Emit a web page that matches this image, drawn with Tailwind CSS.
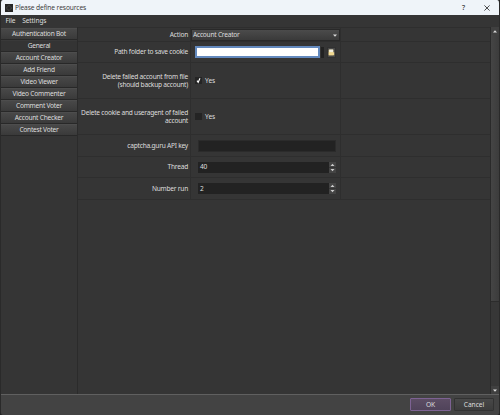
<!DOCTYPE html>
<html lang="en">
<head>
    <meta charset="UTF-8">
    <meta name="viewport" content="width=device-width, initial-scale=1.0">
    <script src="https://cdn.jsdelivr.net/npm/@tailwindcss/browser@4"></script>
    <title>Please define resources</title>
</head>
<body class="bg-[#202020] overflow-hidden">

<div class="w-[500px] h-[415px] flex flex-col bg-[#353535] text-[#dedede] font-['Noto_Sans',sans-serif] text-[6.6px] leading-[8px] tracking-[-0.23px] rounded-[3px] overflow-hidden border-l border-r border-[#2a2a2a]">

    <!-- Title bar -->
    <header class="h-[15px] shrink-0 flex items-center bg-[#eff4f9] text-[#333] pl-1">
        <svg class="w-2 h-2" viewBox="0 0 8 8">
            <rect width="8" height="8" fill="#262626"/>
            <circle cx="4" cy="4" r="2.2" fill="none" stroke="#666" stroke-width=".7" stroke-dasharray="1 .6"/>
        </svg>
        <h1 class="ml-[2px] font-['Open_Sans',sans-serif] text-[6.7px] tracking-[-0.12px]">Please define resources</h1>
        <span class="ml-auto mr-[19px] text-[7px] font-medium">?</span>
        <svg class="w-[6px] h-[6px] mr-[9px]" viewBox="0 0 6 6" stroke="#222" stroke-width=".8"><path d="M.4.4l5.2 5.2M5.6.4L.4 5.6"/></svg>
    </header>

    <!-- Menu -->
    <nav class="h-3 shrink-0 flex items-center gap-[7px] pl-[4.5px]">
        <span>File</span>
        <span class="tracking-[-0.1px]">Settings</span>
    </nav>

    <main class="h-[367px] shrink-0 flex">
        <!-- Sidebar -->
        <aside class="w-[77px] shrink-0 border-r border-[#2b2b2b] pt-px text-center">
            <button class="block w-[76px] h-3 pb-px bg-linear-to-b from-[#484848] to-[#3a3a3a] border-t border-t-[#4d4d4d] border-b border-b-[#282828] leading-[9px]">Authentication Bot</button>
            <button class="block w-[76px] h-3 pb-px bg-[#343434] border-t border-t-[#393939] border-b border-b-[#282828] leading-[9px]">General</button>
            <button class="block w-[76px] h-3 pb-px bg-linear-to-b from-[#484848] to-[#3a3a3a] border-t border-t-[#4d4d4d] border-b border-b-[#282828] leading-[9px]">Account Creator</button>
            <button class="block w-[76px] h-3 pb-px bg-linear-to-b from-[#484848] to-[#3a3a3a] border-t border-t-[#4d4d4d] border-b border-b-[#282828] leading-[9px]">Add Friend</button>
            <button class="block w-[76px] h-3 pb-px bg-linear-to-b from-[#484848] to-[#3a3a3a] border-t border-t-[#4d4d4d] border-b border-b-[#282828] leading-[9px]">Video Viewer</button>
            <button class="block w-[76px] h-3 pb-px bg-linear-to-b from-[#484848] to-[#3a3a3a] border-t border-t-[#4d4d4d] border-b border-b-[#282828] leading-[9px]">Video Commenter</button>
            <button class="block w-[76px] h-3 pb-px bg-linear-to-b from-[#484848] to-[#3a3a3a] border-t border-t-[#4d4d4d] border-b border-b-[#282828] leading-[9px]">Comment Voter</button>
            <button class="block w-[76px] h-3 pb-px bg-linear-to-b from-[#484848] to-[#3a3a3a] border-t border-t-[#4d4d4d] border-b border-b-[#282828] leading-[9px]">Account Checker</button>
            <button class="block w-[76px] h-3 pb-px bg-linear-to-b from-[#484848] to-[#3a3a3a] border-t border-t-[#4d4d4d] border-b border-b-[#282828] leading-[9px]">Contest Voter</button>
        </aside>

        <!-- Form -->
        <section class="flex-1 border-t border-[#2e2e2e] whitespace-nowrap">
            <div class="h-[14px] flex border-b border-[#2e2e2e]">
                <div class="w-[113px] pr-[2px] flex items-center justify-end border-r border-[#2e2e2e]">Action</div>
                <div class="w-[150px] border-r border-[#2e2e2e]">
                    <div class="w-[149px] mt-px h-3 px-[2px] flex items-center justify-between bg-linear-to-b from-[#4b4b4b] to-[#3a3a3a] border border-[#292929]">
                        <span class="-ml-px">Account Creator</span>
                        <svg class="w-1 h-[3px]" viewBox="0 0 4 3"><path d="M0 .5h4L2 2.7z" fill="#ddd"/></svg>
                    </div>
                </div>
            </div>
            <div class="h-[21px] flex border-b border-[#2e2e2e]">
                <div class="w-[113px] pr-[2px] flex items-center justify-end border-r border-[#2e2e2e]">Path folder to save cookie</div>
                <div class="w-[150px] pl-1 flex items-center border-r border-[#2e2e2e]">
                    <div class="w-[125px] h-3 bg-white border-2 border-[#6389bd]"></div>
                    <div class="w-[3px] h-[11px] ml-px bg-[#222]"></div>
                    <button class="w-[9px] h-[11px] ml-[3px] flex items-center justify-center bg-[#484848] border border-[#303030]">
                        <svg class="w-[7px] h-[7px] shrink-0" viewBox="0 0 7 7">
                            <path d="M.7.8h4.6v5.5H.7z" fill="#e2c878"/>
                            <path d="M1.2.5h4v3h-4z" fill="#f2efe2"/>
                            <path d="M.8 3.2h5.4v3H.8z" fill="#f0d890"/>
                        </svg>
                    </button>
                </div>
            </div>
            <div class="h-9 flex border-b border-[#2e2e2e]">
                <div class="w-[113px] pr-[2px] flex items-center justify-end text-right border-r border-[#2e2e2e]">Delete failed account from file<br>(should backup account)</div>
                <div class="w-[150px] pl-1 flex items-center gap-[3px] border-r border-[#2e2e2e]">
                    <svg class="w-[7px] h-[7px]" viewBox="0 0 7 7"><rect width="7" height="7" fill="#242424"/><path d="M2 3.6l1.2 1.7L5 1.2" fill="none" stroke="#fff" stroke-width="1.1"/></svg>
                    <span class="tracking-[0px]">Yes</span>
                </div>
            </div>
            <div class="h-9 flex border-b border-[#2e2e2e]">
                <div class="w-[113px] pr-[2px] flex items-center justify-end text-right border-r border-[#2e2e2e]">Delete cookie and useragent of failed<br>account</div>
                <div class="w-[150px] pl-1 flex items-center gap-[3px] border-r border-[#2e2e2e]">
                    <svg class="w-[7px] h-[7px]" viewBox="0 0 7 7"><rect width="7" height="7" fill="#242424"/></svg>
                    <span class="tracking-[0px]">Yes</span>
                </div>
            </div>
            <div class="h-[22px] flex border-b border-[#2e2e2e]">
                <div class="w-[113px] pr-[2px] flex items-center justify-end border-r border-[#2e2e2e]">captcha.guru API key</div>
                <div class="w-[150px] pl-[7px] flex items-center border-r border-[#2e2e2e]">
                    <div class="w-[138px] h-3 bg-[#222] border border-[#2b2b2b]"></div>
                </div>
            </div>
            <div class="h-[21px] flex border-b border-[#2e2e2e]">
                <div class="w-[113px] pr-[2px] flex items-center justify-end border-r border-[#2e2e2e]">Thread</div>
                <div class="w-[150px] pl-[7px] flex items-center border-r border-[#2e2e2e]">
                    <div class="w-[138px] h-[11px] pl-[2px] flex items-center justify-between bg-[#222]">
                        <span>40</span>
                        <svg class="w-[7px] h-[11px]" viewBox="0 0 7 11"><rect width="7" height="11" fill="#444"/><path d="M0 5.5h7" stroke="#2c2c2c" stroke-width=".6"/><path d="M1.5 4h4l-2-2.3zM1.5 7h4l-2 2.3z" fill="#ccc"/></svg>
                    </div>
                </div>
            </div>
            <div class="h-[22px] flex border-b border-[#2e2e2e]">
                <div class="w-[113px] pr-[2px] flex items-center justify-end border-r border-[#2e2e2e]">Number run</div>
                <div class="w-[150px] pl-[7px] flex items-center border-r border-[#2e2e2e]">
                    <div class="w-[138px] h-[11px] pl-[2px] flex items-center justify-between bg-[#222]">
                        <span>2</span>
                        <svg class="w-[7px] h-[11px]" viewBox="0 0 7 11"><rect width="7" height="11" fill="#444"/><path d="M0 5.5h7" stroke="#2c2c2c" stroke-width=".6"/><path d="M1.5 4h4l-2-2.3zM1.5 7h4l-2 2.3z" fill="#ccc"/></svg>
                    </div>
                </div>
            </div>
        </section>

        <!-- Scrollbar -->
        <div class="w-[9px] shrink-0 flex flex-col bg-[#373737] border-l border-[#2a2a2a]">
            <div class="h-2 flex items-center justify-center bg-[#404040]">
                <svg class="w-1 h-[3px]" viewBox="0 0 4 3"><path d="M0 2.5h4L2 .3z" fill="#ddd"/></svg>
            </div>
            <div class="h-[267px] bg-linear-to-r from-[#454545] to-[#3c3c3c] border-b border-[#2c2c2c]"></div>
            <div class="h-2 mt-auto flex items-center justify-center bg-[#404040]">
                <svg class="w-1 h-[3px]" viewBox="0 0 4 3"><path d="M0 .5h4L2 2.7z" fill="#ddd"/></svg>
            </div>
        </div>
    </main>

    <!-- Dialog buttons -->
    <footer class="flex-1 flex justify-end gap-[3px] pt-[3px] pr-[5px] bg-[#434343] border-t border-[#606060]">
        <button class="w-[41px] h-[13px] bg-linear-to-b from-[#5c4d64] to-[#50435a] border border-[#7d6293] rounded-[1px]">OK</button>
        <button class="w-10 h-[13px] bg-linear-to-b from-[#484848] to-[#3c3c3c] border border-[#323232] rounded-[1px] tracking-[0px]">Cancel</button>
    </footer>
</div>

</body>
</html>
